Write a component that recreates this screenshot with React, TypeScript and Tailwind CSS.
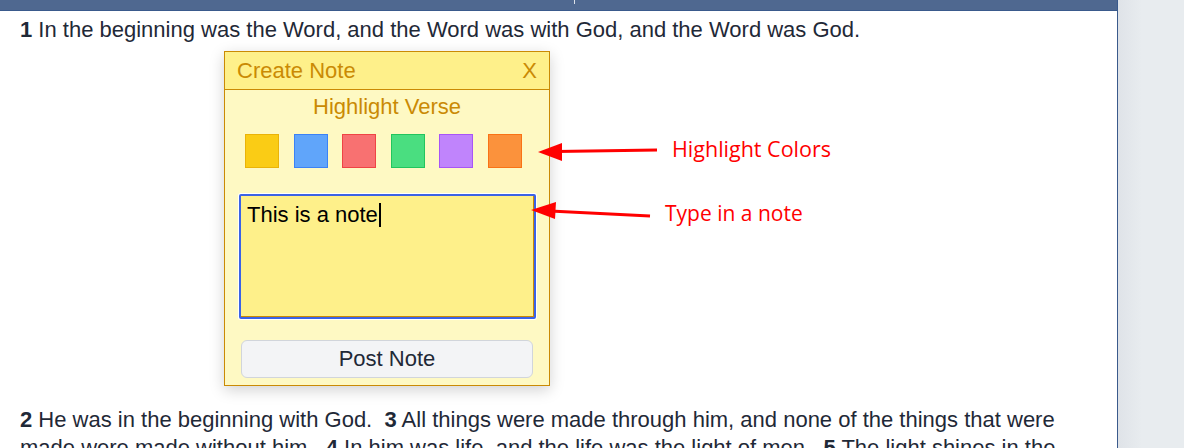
const swatches = [
  "bg-[#facc15] border-[#eab308]",
  "bg-[#60a5fa] border-[#3b82f6]",
  "bg-[#f87171] border-[#ef4444]",
  "bg-[#4ade80] border-[#22c55e]",
  "bg-[#c084fc] border-[#a855f7]",
  "bg-[#fb923c] border-[#f97316]",
];

function CreateNote() {
  return (
    <div className="ml-[204px] mt-[7px] w-[326px] border border-[#ca8a04] bg-[#fef9c3] shadow-[0_4px_14px_rgba(0,0,0,0.18)]">
      <div className="flex h-[38px] items-center justify-between border-b border-[#ca8a04] bg-[#fef08a] px-[12px] text-[22px] text-[#ca8a04]">
        <span>Create Note</span>
        <span>X</span>
      </div>
      <div className="pt-[3px] pb-[7px]">
        <div className="text-center text-[22px] leading-[28px] text-[#ca8a04]">Highlight Verse</div>
        <div className="ml-[20px] mt-[13px] flex w-[277px] justify-between">
          {swatches.map((c, i) => (
            <div key={i} className={"h-[34px] w-[34px] border " + c} />
          ))}
        </div>
        <div className="ml-[14px] mt-[26px] h-[125px] w-[297px] rounded-[2px] border-2 border-[#3b63e6] bg-[#fef08a] shadow-[inset_-1px_-1px_0_#ca8a04] ring-1 ring-white">
          <div className="flex items-center px-[6px] pt-[7px] text-[22px] leading-[24px] text-black">
            This is a note
            <span className="ml-[1px] inline-block h-[24px] w-[2px] bg-black" />
          </div>
        </div>
        <button className="ml-[16px] mt-[21px] h-[38px] w-[292px] rounded-[6px] border border-[#d1d5db] bg-[#f3f4f6] text-[22px] text-[#1f2937]">
          Post Note
        </button>
      </div>
    </div>
  );
}

function Annotations() {
  return (
    <div className="pointer-events-none absolute inset-0">
      <svg className="absolute left-0 top-0" width="1184" height="448">
        <line x1="657" y1="150" x2="556" y2="151.5" stroke="#ff0000" strokeWidth="3" />
        <polygon points="538,152 562,143 562,161" fill="#ff0000" />
        <line x1="650" y1="216" x2="550" y2="211" stroke="#ff0000" strokeWidth="3" />
        <polygon points="531,210 556,202 555,219" fill="#ff0000" />
      </svg>
      <div className="absolute left-[672px] top-[135px] font-['Open_Sans',sans-serif] text-[21.5px] leading-[28px] text-[#ff0000]">
        Highlight Colors
      </div>
      <div className="absolute left-[665px] top-[199px] font-['Open_Sans',sans-serif] text-[21px] leading-[28px] text-[#ff0000]">
        Type in a note
      </div>
    </div>
  );
}

export default function App() {
  return (
    <div className="relative flex h-[448px] w-[1184px] overflow-hidden bg-white font-['Liberation_Sans',Arial,sans-serif]">
      <main className="w-[1118px] border-r border-[#3a5a8c]">
        <div className="flex h-[11px] border-b border-[#3a5a8c] bg-[#4f6890]">
          <div className="ml-[574px] h-[4px] w-[1px] bg-white/80" />
        </div>
        <div className="px-[20px] text-[22px] leading-[28px] text-[#1f2937]">
          <p className="mt-[5px]">
            <b>1</b> In the beginning was the Word, and the Word was with God, and the Word was God.
          </p>
          <CreateNote />
          <p className="mt-[20px]">
            <b>2</b> He was in the beginning with God.&nbsp; <b>3</b> All things were made through him, and none of
            the things that were made were made without him.&nbsp; <b>4</b> In him was life, and the life was the light
            of men.&nbsp; <b>5</b> The light shines in the darkness, and the darkness has not overcome it.
          </p>
        </div>
      </main>
      <aside className="flex-1 bg-[linear-gradient(to_right,#dfe3e8,#e8ecef_24px)]" />
      <Annotations />
    </div>
  );
}
